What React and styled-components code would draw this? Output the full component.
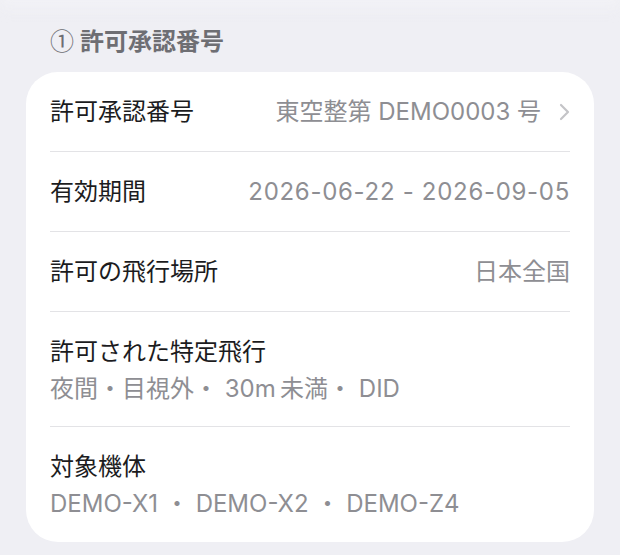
import React from "react";
import styled, { createGlobalStyle } from "styled-components";

const Global = createGlobalStyle`
  body {
    margin: 0;
    background: #efeff4;
    font-family: "Inter", "Noto Sans CJK JP", sans-serif;
  }
`;

const Page = styled.div`
  width: 620px;
  height: 555px;
  padding: 0 26px;
  box-sizing: border-box;
  overflow: hidden;
  position: relative;
`;

const TopFade = styled.div`
  position: absolute;
  left: 0;
  right: 0;
  top: -30px;
  height: 46px;
  background: linear-gradient(#f7f7fa, rgba(239, 239, 244, 0));
  filter: blur(6px);
`;

const SectionTitle = styled.h2`
  margin: 0;
  padding: 26px 24px 0;
  height: 72px;
  box-sizing: border-box;
  font-size: 24px;
  font-weight: 700;
  color: #6e6e73;
  line-height: 28px;
  position: relative;
`;

const Circled = styled.span`
  font-family: "Noto Sans CJK JP", sans-serif;
  font-weight: 400;
  margin-right: 6px;
`;

const Card = styled.div`
  background: #fff;
  border-radius: 32px;
  padding: 0 24px;
`;

const Row = styled.div`
  display: flex;
  flex-direction: ${(p) => (p.$stacked ? "column" : "row")};
  align-items: ${(p) => (p.$stacked ? "flex-start" : "center")};
  justify-content: ${(p) => (p.$stacked ? "flex-start" : "space-between")};
  gap: ${(p) => (p.$stacked ? "7px" : "0")};
  height: ${(p) => (p.$stacked ? "115px" : "80px")};
  padding-top: ${(p) => (p.$stacked ? "25px" : "0")};
  box-sizing: border-box;
  border-bottom: ${(p) => (p.$last ? "none" : "1px solid #e3e3e6")};
`;

const Label = styled.span`
  font-size: 24px;
  color: #1c1c1e;
  line-height: 30px;
`;

const Value = styled.span`
  font-size: 24px;
  color: #8e8e93;
  line-height: 30px;
  letter-spacing: ${(p) => (p.$wide ? "0.7px" : "0")};
  display: flex;
  align-items: center;
  gap: 18px;
  white-space: pre;
`;

const Chevron = () => (
  <svg width="11" height="18" viewBox="0 0 11 18" fill="none">
    <path d="M2 2l7 7-7 7" stroke="#c4c4c7" strokeWidth="2.2" strokeLinecap="round" strokeLinejoin="round" />
  </svg>
);

export default function App() {
  return (
    <Page>
      <Global />
      <TopFade />
      <SectionTitle>
        <Circled>①</Circled>許可承認番号
      </SectionTitle>
      <Card>
        <Row>
          <Label>許可承認番号</Label>
          <Value>
            <span>東空整第 DEMO0003 号</span>
            <Chevron />
          </Value>
        </Row>
        <Row>
          <Label>有効期間</Label>
          <Value $wide>2026-06-22 - 2026-09-05</Value>
        </Row>
        <Row>
          <Label>許可の飛行場所</Label>
          <Value>日本全国</Value>
        </Row>
        <Row $stacked>
          <Label>許可された特定飛行</Label>
          <Value>{"夜間・目視外・ 30m\u2009未満・ DID"}</Value>
        </Row>
        <Row $stacked $last>
          <Label>対象機体</Label>
          <Value>DEMO-X1 ・ DEMO-X2 ・ DEMO-Z4</Value>
        </Row>
      </Card>
    </Page>
  );
}
